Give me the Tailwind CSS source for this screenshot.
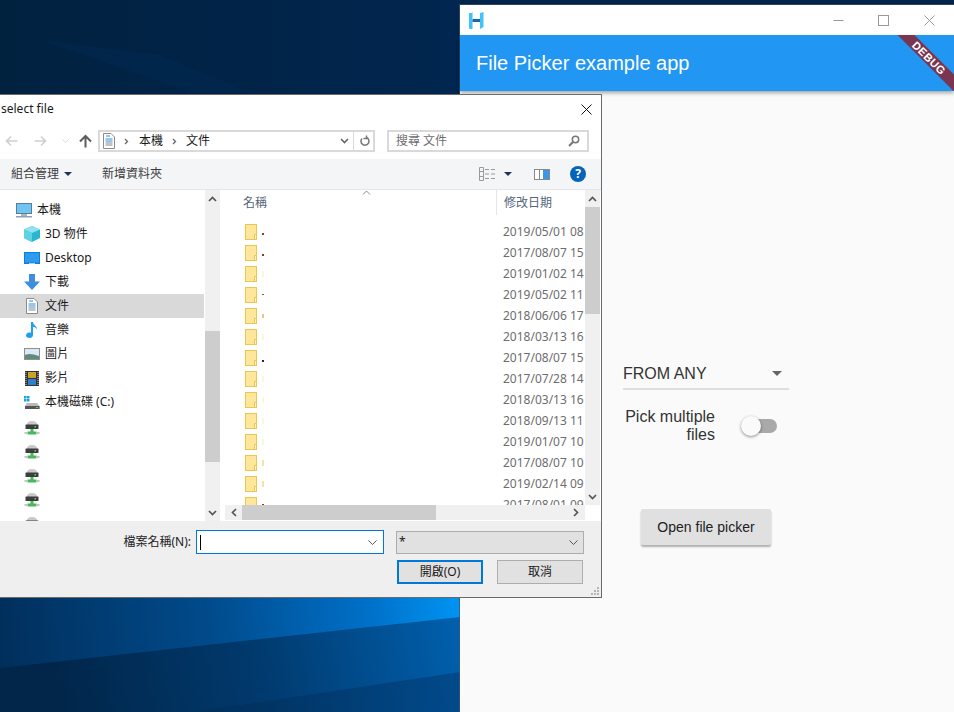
<!DOCTYPE html>
<html lang="en">
<head>
    <meta charset="UTF-8">
    <title>File Picker example app</title>
    <script src="https://cdn.jsdelivr.net/npm/@tailwindcss/browser@4"></script>
</head>
<body class="relative w-[954px] h-[712px] overflow-hidden bg-[#01244a] font-['Noto_Sans','Noto_Sans_CJK_TC',sans-serif] text-xs text-[#1a1a1a]">

    <!-- shared icons -->
    <svg class="hidden">
        <symbol id="folder" viewBox="0 0 12 16">
            <rect x="0.5" y="0.5" width="11" height="15" fill="#fee79a" stroke="#e9c750"/>
            <path d="M9.5 15.5V10.5H11.5V15.5Z" fill="#fff3c4" stroke="#e9c750"/>
        </symbol>
        <symbol id="netdrive" viewBox="0 0 16 16">
            <path d="M3 4.5C3 2.5 4.5 1 8 1s5 1.5 5 3.5V6H3Z" fill="#c9c9c9"/>
            <rect x="1.5" y="4.5" width="13" height="4.5" rx="0.5" fill="#3d3d3d"/>
            <rect x="10.5" y="6" width="1.5" height="1.5" fill="#4be04b"/>
            <rect x="6.5" y="9" width="3" height="3" fill="#46b95a"/>
            <rect x="3.5" y="11.5" width="9" height="3" fill="#46b95a"/>
            <rect x="0.5" y="12" width="3" height="2" fill="#c4c4c4"/>
            <rect x="12.5" y="12" width="3" height="2" fill="#c4c4c4"/>
        </symbol>
        <symbol id="docicon" viewBox="0 0 12 16">
            <path d="M0.5 0.5H8L11.5 4V15.5H0.5Z" fill="#fff" stroke="#8c8c8c"/>
            <path d="M3 3H7M2.5 6H9.5M2.5 8H9.5" stroke="#2f8fdc"/>
            <path d="M2.5 10H9.5M2.5 12H9.5" stroke="#7a8a99"/>
        </symbol>
    </svg>

    <!-- desktop wallpaper -->
    <svg class="absolute inset-0" width="954" height="712" viewBox="0 0 954 712">
        <defs>
            <linearGradient id="wallTop" x1="0" y1="0" x2="1" y2="0">
                <stop offset="0" stop-color="#01223f"/>
                <stop offset="0.5" stop-color="#012347"/>
                <stop offset="1" stop-color="#01264f"/>
            </linearGradient>
            <linearGradient id="wallUpper" gradientUnits="userSpaceOnUse" x1="0" y1="640" x2="460" y2="600">
                <stop offset="0" stop-color="#012f5c"/>
                <stop offset="0.45" stop-color="#014a8a"/>
                <stop offset="0.8" stop-color="#0070c8"/>
                <stop offset="1" stop-color="#0094f2"/>
            </linearGradient>
            <linearGradient id="wallLower" gradientUnits="userSpaceOnUse" x1="60" y1="700" x2="460" y2="620">
                <stop offset="0" stop-color="#01264a"/>
                <stop offset="0.5" stop-color="#013a6e"/>
                <stop offset="1" stop-color="#0160ae"/>
            </linearGradient>
            <linearGradient id="wallBottom" x1="0" y1="0" x2="1" y2="0">
                <stop offset="0" stop-color="#012c55"/>
                <stop offset="1" stop-color="#01427e"/>
            </linearGradient>
        </defs>
        <rect width="460" height="100" fill="url(#wallTop)"/>
        <path d="M40 40L160 55L250 92H190Z" fill="#02305c" opacity="0.3"/>
        <rect y="590" width="460" height="122" fill="url(#wallLower)"/>
        <path d="M0 590H460V617L0 668Z" fill="url(#wallUpper)"/>
        <path d="M195 712L460 672V712Z" fill="url(#wallBottom)" opacity="0.7"/>
    </svg>

    <!-- flutter app window -->
    <div class="absolute left-[460px] top-[5px] w-[494px] h-[707px] flex flex-col bg-[#fafafa] font-['Liberation_Sans',sans-serif] shadow-[0_0_0_1px_rgba(70,80,100,0.7)]">
        <div class="h-[30px] shrink-0 bg-white flex items-center pl-[9px]">
            <svg width="15" height="17" viewBox="0 0 15 17">
                <path d="M0 1H2.5L3.5 0V17H1L0 16Z" fill="#3fc3fb"/>
                <path d="M11 1L14.5 0V15L11 17Z" fill="#3fc3fb"/>
                <rect x="3.5" y="7" width="7.5" height="3" fill="#1f66a8"/>
            </svg>
            <svg class="ml-[349px]" width="11" height="11" viewBox="0 0 11 11"><path d="M0.5 5.5H10.5" stroke="#999"/></svg>
            <svg class="ml-[34px]" width="11" height="11" viewBox="0 0 11 11"><rect x="0.5" y="0.5" width="10" height="10" fill="none" stroke="#999"/></svg>
            <svg class="ml-[35px]" width="11" height="11" viewBox="0 0 11 11"><path d="M0.5 0.5L10.5 10.5M10.5 0.5L0.5 10.5" stroke="#999"/></svg>
        </div>
        <div class="relative h-[56px] shrink-0 bg-[#2196f3] flex items-center pl-4 shadow-[0_2px_4px_rgba(0,0,0,0.35)] overflow-hidden">
            <span class="text-[20px] text-white">File Picker example app</span>
            <!-- debug ribbon -->
            <div class="absolute left-[414px] top-[17px] w-[110px] h-[12px] rotate-45 bg-[#7a3650] flex items-center justify-center text-[11px] font-bold tracking-[0.5px] text-white">DEBUG</div>
        </div>
        <div class="flex-1 flex flex-col items-center pt-[267px] pr-[2px]">
            <div class="w-[166px] h-[32px] shrink-0 flex items-center justify-between border-b-2 border-[#dedede] text-base text-[#333] pr-[7px]">
                <span class="mt-px">FROM ANY</span>
                <span class="w-0 h-0 border-x-[5px] border-x-transparent border-t-[5px] border-t-[#666]"></span>
            </div>
            <div class="w-[166px] mt-[18px] flex items-center text-base leading-[18px] text-[#333]">
                <div class="w-[92px] text-right">Pick multiple files</div>
                <div class="relative ml-[30px] w-[32px] h-[14px] rounded-full bg-[#a9a9a9]">
                    <div class="absolute left-[-4px] top-[-3px] w-[20px] h-[20px] rounded-full bg-[#fafafa] shadow-[0_1px_3px_rgba(0,0,0,0.45)]"></div>
                </div>
            </div>
            <button class="mt-[65px] w-[130px] h-[36px] shrink-0 rounded-[2px] bg-[#e0e0e0] text-sm text-[#222] shadow-[0_2px_2px_rgba(0,0,0,0.3)]">Open file picker</button>
        </div>
    </div>

    <!-- windows file dialog -->
    <div class="absolute left-0 top-[94px] w-[602px] h-[504px] flex flex-col bg-white border-y border-r border-[#6a6a6a]">

        <!-- title -->
        <div class="h-[30px] shrink-0 flex items-center justify-between pl-px pr-[9px] pb-[2px]">
            <span class="text-xs">select file</span>
            <svg width="11" height="11" viewBox="0 0 11 11"><path d="M0.5 0.5L10.5 10.5M10.5 0.5L0.5 10.5" stroke="#111"/></svg>
        </div>

        <!-- address row -->
        <div class="h-[34px] shrink-0 flex items-start pt-[5px]">
            <svg class="ml-[5px] mt-[5px]" width="13" height="12" viewBox="0 0 13 12"><path d="M12.5 6H1.5M6 1.5L1.5 6L6 10.5" fill="none" stroke="#cfcfcf" stroke-width="1.6"/></svg>
            <svg class="ml-[16px] mt-[5px]" width="13" height="12" viewBox="0 0 13 12"><path d="M0.5 6H11.5M7 1.5L11.5 6L7 10.5" fill="none" stroke="#cfcfcf" stroke-width="1.6"/></svg>
            <svg class="ml-[15px] mt-[9px]" width="7" height="4" viewBox="0 0 7 4"><path d="M0.5 0.5L3.5 3.5L6.5 0.5" fill="none" stroke="#d8d8d8"/></svg>
            <svg class="ml-[10px] mt-[4px]" width="13" height="14" viewBox="0 0 13 14"><path d="M6.5 13.5V2M1 7.5L6.5 2L12 7.5" fill="none" stroke="#5c5c5c" stroke-width="2"/></svg>
            <div class="ml-[6px] w-[277px] h-[22px] flex items-center border-2 border-[#d9d9d9]">
                <svg class="ml-[3px] shrink-0" width="12" height="16"><use href="#docicon"/></svg>
                <svg class="ml-[9px] shrink-0" width="5" height="7" viewBox="0 0 5 7"><path d="M1 1L3.5 3.5L1 6" fill="none" stroke="#666" stroke-width="1.3"/></svg>
                <span class="ml-[10px]">本機</span>
                <svg class="ml-[9px] shrink-0" width="5" height="7" viewBox="0 0 5 7"><path d="M1 1L3.5 3.5L1 6" fill="none" stroke="#666" stroke-width="1.3"/></svg>
                <span class="ml-[9px]">文件</span>
                <svg class="ml-[130px] shrink-0" width="9" height="6" viewBox="0 0 9 6"><path d="M1 1L4.5 4.5L8 1" fill="none" stroke="#666" stroke-width="1.6"/></svg>
                <span class="ml-[4px] w-px h-full bg-[#d9d9d9]"></span>
                <svg class="ml-[6px] shrink-0" width="10" height="12" viewBox="0 0 10 12"><path d="M6.5 2.5A4 4 0 1 1 2 3.5M6.5 0.5V3.5H3.5" fill="none" stroke="#777" stroke-width="1.5"/></svg>
            </div>
            <div class="ml-[12px] w-[202px] h-[22px] flex items-center justify-between border-2 border-[#d9d9d9] pl-[7px] pr-[7px] text-[#6d6d6d]">
                <span>搜尋 文件</span>
                <svg width="12" height="12" viewBox="0 0 12 12"><circle cx="7.5" cy="4.5" r="3.2" fill="none" stroke="#777" stroke-width="1.5"/><path d="M5 7L1 11" stroke="#777" stroke-width="2"/></svg>
            </div>
        </div>

        <!-- toolbar -->
        <div class="h-[31px] shrink-0 flex items-center bg-[#f4f5f7] border-b border-[#e6e6e6] text-[#3c3c3c]">
            <span class="ml-[11px]">組合管理</span>
            <span class="ml-[5px] w-0 h-0 border-x-[4px] border-x-transparent border-t-[4px] border-t-[#1d3557]"></span>
            <span class="ml-[30px]">新增資料夾</span>
            <svg class="ml-[317px]" width="16" height="14" viewBox="0 0 16 14">
                <path d="M0.5 0.5H4.5V13.5H0.5Z" fill="none" stroke="#999"/>
                <path d="M1 4.5H4M1 9.5H4" stroke="#999"/>
                <path d="M6 2.5H10M12 2.5H16M6 7H10M12 7H16M6 11.5H10M12 11.5H16" stroke="#999"/>
            </svg>
            <span class="ml-[9px] w-0 h-0 border-x-[4px] border-x-transparent border-t-[4px] border-t-[#1d3557]"></span>
            <svg class="ml-[22px]" width="16" height="11" viewBox="0 0 16 11">
                <rect x="0.5" y="0.5" width="15" height="10" fill="#fff" stroke="#888"/>
                <path d="M5.5 0.5V10.5" stroke="#888"/>
                <rect x="9" y="1" width="6" height="9" fill="#3b96e8"/>
            </svg>
            <svg class="ml-[20px]" width="16" height="16" viewBox="0 0 16 16"><circle cx="8" cy="8" r="8" fill="#0563b8"/></svg>
            <span class="-ml-[12px] w-[8px] text-center text-[12px] font-bold text-white">?</span>
        </div>

        <!-- panes -->
        <div class="h-[331px] shrink-0 flex">
            <!-- nav tree -->
            <div class="w-[204px] mr-px shrink-0 flex flex-col overflow-hidden pt-[8px]">
                <div class="h-[24px] shrink-0 flex items-center pl-[16px]">
                    <svg width="16" height="15" viewBox="0 0 16 15">
                        <rect x="0.5" y="0.5" width="15" height="10" fill="#6fc6f5" stroke="#5d7b94"/>
                        <rect x="5" y="11" width="6" height="2" fill="#a9b8c4"/>
                        <rect x="0" y="13" width="16" height="1.5" fill="#8ea2b3"/>
                    </svg>
                    <span class="ml-[5px]">本機</span>
                </div>
                <div class="h-[24px] shrink-0 flex items-center pl-[24px]">
                    <svg width="16" height="16" viewBox="0 0 16 16">
                        <path d="M8 0L16 3.5V12L8 16L0 12V3.5Z" fill="#2bb6cf"/>
                        <path d="M8 0L16 3.5L8 7L0 3.5Z" fill="#8fe3ee"/>
                        <path d="M0 3.5L8 7V16L0 12Z" fill="#5fd2e2"/>
                    </svg>
                    <span class="ml-[5px]">3D 物件</span>
                </div>
                <div class="h-[24px] shrink-0 flex items-center pl-[24px]">
                    <svg width="16" height="13" viewBox="0 0 16 13">
                        <rect width="16" height="12" fill="#0f7ed8"/>
                        <rect x="1" y="1" width="14" height="9.5" fill="#2d9bf0"/>
                        <rect x="5" y="11" width="6" height="1" fill="#a9d4f5"/>
                    </svg>
                    <span class="ml-[5px]">Desktop</span>
                </div>
                <div class="h-[24px] shrink-0 flex items-center pl-[24px]">
                    <svg width="16" height="16" viewBox="0 0 16 16"><path d="M5 0H11V7.5H16L8 16L0 7.5H5Z" fill="#3d8fdc"/></svg>
                    <span class="ml-[5px]">下載</span>
                </div>
                <div class="h-[24px] shrink-0 flex items-center pl-[26px] bg-[#d9d9d9]">
                    <svg width="12" height="16"><use href="#docicon"/></svg>
                    <span class="ml-[7px]">文件</span>
                </div>
                <div class="h-[24px] shrink-0 flex items-center pl-[26px]">
                    <svg width="12" height="16" viewBox="0 0 12 16"><path d="M5 0H7C7 3 11 3.5 11 7.5C10 5.5 8.5 5 7 5V13C7 15 5.5 16 3.5 16S0 15 0 13.3 1.5 10.5 3.5 10.5C4 10.5 4.5 10.6 5 10.8Z" fill="#1fa0ef"/></svg>
                    <span class="ml-[7px]">音樂</span>
                </div>
                <div class="h-[24px] shrink-0 flex items-center pl-[24px]">
                    <svg width="16" height="12" viewBox="0 0 16 12">
                        <rect x="0.5" y="0.5" width="15" height="11" fill="#dbe9f4" stroke="#8f8f8f"/>
                        <path d="M1 7C5 5 9 6 15 8V11H1Z" fill="#5f8c7a"/>
                    </svg>
                    <span class="ml-[5px]">圖片</span>
                </div>
                <div class="h-[24px] shrink-0 flex items-center pl-[25px]">
                    <svg width="14" height="15" viewBox="0 0 14 15">
                        <rect width="14" height="15" fill="#333"/>
                        <rect x="3" y="1" width="8" height="6" fill="#c9a227"/>
                        <rect x="3" y="8" width="8" height="6" fill="#2e7fd0"/>
                        <path d="M1 1V14M13 1V14" stroke="#ccc" stroke-dasharray="1 1"/>
                    </svg>
                    <span class="ml-[6px]">影片</span>
                </div>
                <div class="h-[24px] shrink-0 flex items-center pl-[24px]">
                    <svg width="16" height="13" viewBox="0 0 16 13">
                        <rect width="2.5" height="2.5" fill="#1ba1e2"/><rect x="3" width="2.5" height="2.5" fill="#1ba1e2"/>
                        <rect y="3" width="2.5" height="2.5" fill="#1ba1e2"/><rect x="3" y="3" width="2.5" height="2.5" fill="#1ba1e2"/>
                        <path d="M3 7H13L15.5 10V13H1V10Z" fill="#b9b9b9"/>
                        <rect x="1" y="10" width="14.5" height="3" fill="#555"/>
                        <rect x="12" y="11" width="2" height="1" fill="#4be04b"/>
                    </svg>
                    <span class="ml-[5px]">本機磁碟 (C:)</span>
                </div>
                <div class="h-[24px] shrink-0 flex items-center pl-[24px] mt-[2px]"><svg width="16" height="16"><use href="#netdrive"/></svg></div>
                <div class="h-[24px] shrink-0 flex items-center pl-[24px]"><svg width="16" height="16"><use href="#netdrive"/></svg></div>
                <div class="h-[24px] shrink-0 flex items-center pl-[24px]"><svg width="16" height="16"><use href="#netdrive"/></svg></div>
                <div class="h-[24px] shrink-0 flex items-center pl-[24px]"><svg width="16" height="16"><use href="#netdrive"/></svg></div>
                <div class="h-[24px] shrink-0 flex items-start justify-between pl-[24px] pt-[4px]">
                    <svg width="16" height="16"><use href="#netdrive"/></svg>
                </div>
            </div>

            <!-- nav scrollbar -->
            <div class="w-[15px] shrink-0 flex flex-col items-center bg-[#f0f0f0]">
                <div class="h-[17px] shrink-0 flex items-center justify-center">
                    <svg width="9" height="6" viewBox="0 0 9 6"><path d="M1 5L4.5 1.5L8 5" fill="none" stroke="#555" stroke-width="1.7"/></svg>
                </div>
                <div class="mt-[124px] w-full h-[131px] shrink-0 bg-[#cdcdcd]"></div>
                <div class="mt-auto h-[17px] shrink-0 flex items-center justify-center">
                    <svg width="9" height="6" viewBox="0 0 9 6"><path d="M1 1L4.5 4.5L8 1" fill="none" stroke="#555" stroke-width="1.7"/></svg>
                </div>
            </div>

            <!-- file list -->
            <div class="flex-1 min-w-0 flex flex-col pl-[5px]">
                <div class="h-[315px] shrink-0 flex">
                    <div class="w-[360px] shrink-0 flex flex-col overflow-hidden">
                        <div class="relative h-[25px] shrink-0 flex items-center text-[#54667a]">
                            <span class="ml-[18px] w-[253px]">名稱</span>
                            <span class="w-px h-full bg-[#e5e5e5]"></span>
                            <span class="ml-[7px]">修改日期</span>
                            <svg class="absolute left-[137px] top-[0px]" width="9" height="5" viewBox="0 0 9 5"><path d="M1 4.5L4.5 1L8 4.5" fill="none" stroke="#8a8a8a"/></svg>
                        </div>
                        <div class="flex flex-col pt-[6px] text-[#6d6d6d] whitespace-nowrap">
                            <div class="h-[21px] shrink-0 flex items-center"><svg class="ml-[20px] shrink-0" width="12" height="16"><use href="#folder"/></svg><span class="ml-[5px] mt-[5px] w-[2px] h-[2px] shrink-0 bg-[#8a3a2a]"></span><span class="ml-[239px]">2019/05/01 08</span></div>
                            <div class="h-[21px] shrink-0 flex items-center"><svg class="ml-[20px] shrink-0" width="12" height="16"><use href="#folder"/></svg><span class="ml-[5px] mt-[5px] w-[2px] h-[2px] shrink-0 bg-[#8a3a2a]"></span><span class="ml-[239px]">2017/08/07 15</span></div>
                            <div class="h-[21px] shrink-0 flex items-center"><svg class="ml-[20px] shrink-0" width="12" height="16"><use href="#folder"/></svg><span class="ml-[5px] w-[2px] h-[6px] shrink-0 bg-[#fdf6d8]"></span><span class="ml-[239px]">2019/01/02 14</span></div>
                            <div class="h-[21px] shrink-0 flex items-center"><svg class="ml-[20px] shrink-0" width="12" height="16"><use href="#folder"/></svg><span class="ml-[5px] w-[2px] h-[1px] shrink-0 bg-[#a0562f]"></span><span class="ml-[239px]">2019/05/02 11</span></div>
                            <div class="h-[21px] shrink-0 flex items-center"><svg class="ml-[20px] shrink-0" width="12" height="16"><use href="#folder"/></svg><span class="ml-[5px] w-[2px] h-[4px] shrink-0 bg-[#f0c08a]"></span><span class="ml-[239px]">2018/06/06 17</span></div>
                            <div class="h-[21px] shrink-0 flex items-center"><svg class="ml-[20px] shrink-0" width="12" height="16"><use href="#folder"/></svg><span class="ml-[5px] w-[2px] h-[6px] shrink-0 bg-[#fdf6d8]"></span><span class="ml-[239px]">2018/03/13 16</span></div>
                            <div class="h-[21px] shrink-0 flex items-center"><svg class="ml-[20px] shrink-0" width="12" height="16"><use href="#folder"/></svg><span class="ml-[5px] mt-[7px] w-[2px] h-[2px] shrink-0 bg-[#2a2050]"></span><span class="ml-[239px]">2017/08/07 15</span></div>
                            <div class="h-[21px] shrink-0 flex items-center"><svg class="ml-[20px] shrink-0" width="12" height="16"><use href="#folder"/></svg><span class="ml-[5px] w-[2px] h-[6px] shrink-0 bg-[#fdf6d8]"></span><span class="ml-[239px]">2017/07/28 14</span></div>
                            <div class="h-[21px] shrink-0 flex items-center"><svg class="ml-[20px] shrink-0" width="12" height="16"><use href="#folder"/></svg><span class="ml-[5px] w-[2px] h-[6px] shrink-0 bg-[#fdf6d8]"></span><span class="ml-[239px]">2018/03/13 16</span></div>
                            <div class="h-[21px] shrink-0 flex items-center"><svg class="ml-[20px] shrink-0" width="12" height="16"><use href="#folder"/></svg><span class="ml-[5px] w-[2px] h-[6px] shrink-0 bg-[#fdf6d8]"></span><span class="ml-[239px]">2018/09/13 11</span></div>
                            <div class="h-[21px] shrink-0 flex items-center"><svg class="ml-[20px] shrink-0" width="12" height="16"><use href="#folder"/></svg><span class="ml-[5px] w-[2px] h-[6px] shrink-0 bg-[#fdf6d8]"></span><span class="ml-[239px]">2019/01/07 10</span></div>
                            <div class="h-[21px] shrink-0 flex items-center"><svg class="ml-[20px] shrink-0" width="12" height="16"><use href="#folder"/></svg><span class="ml-[5px] w-[2px] h-[6px] shrink-0 bg-[#f7e3a0]"></span><span class="ml-[239px]">2017/08/07 10</span></div>
                            <div class="h-[21px] shrink-0 flex items-center"><svg class="ml-[20px] shrink-0" width="12" height="16"><use href="#folder"/></svg><span class="ml-[5px] w-[2px] h-[6px] shrink-0 bg-[#f7e3a0]"></span><span class="ml-[239px]">2019/02/14 09</span></div>
                            <div class="h-[21px] shrink-0 flex items-center"><svg class="ml-[20px] shrink-0" width="12" height="16"><use href="#folder"/></svg><span class="ml-[5px] w-[2px] h-[2px] shrink-0 bg-[#8a3a2a]"></span><span class="ml-[239px]">2017/08/01 09</span></div>
                        </div>
                    </div>
                    <div class="w-[15px] shrink-0 flex flex-col bg-[#f0f0f0]">
                        <div class="h-[17px] shrink-0 flex items-center justify-center">
                            <svg width="9" height="6" viewBox="0 0 9 6"><path d="M1 5L4.5 1.5L8 5" fill="none" stroke="#555" stroke-width="1.7"/></svg>
                        </div>
                        <div class="h-[107px] shrink-0 bg-[#cdcdcd]"></div>
                        <div class="mt-auto h-[17px] shrink-0 flex items-center justify-center">
                            <svg width="9" height="6" viewBox="0 0 9 6"><path d="M1 1L4.5 4.5L8 1" fill="none" stroke="#555" stroke-width="1.7"/></svg>
                        </div>
                    </div>
                </div>
                <div class="h-[15px] shrink-0 flex">
                    <div class="w-[360px] shrink-0 flex items-center bg-[#f0f0f0]">
                        <div class="w-[17px] shrink-0 flex justify-center">
                            <svg width="6" height="9" viewBox="0 0 6 9"><path d="M5 1L1.5 4.5L5 8" fill="none" stroke="#555" stroke-width="1.7"/></svg>
                        </div>
                        <div class="w-[194px] h-full bg-[#cdcdcd]"></div>
                        <svg class="ml-auto mr-[6px]" width="6" height="9" viewBox="0 0 6 9"><path d="M1 1L4.5 4.5L1 8" fill="none" stroke="#555" stroke-width="1.7"/></svg>
                    </div>
                </div>
            </div>
        </div>

        <!-- file name row and buttons -->
        <div class="relative flex-1 flex flex-col bg-[#efefef]">
            <div class="flex items-center pt-[9px]">
                <span class="w-[191px] text-right text-[#222]">檔案名稱(N):</span>
                <div class="ml-[5px] w-[188px] h-[24px] flex items-center justify-between bg-white border-[1.5px] border-[#0078d7] pl-[3px] pr-[6px]">
                    <span class="w-px h-[15px] bg-black"></span>
                    <svg width="9" height="5" viewBox="0 0 9 5"><path d="M0.5 0.5L4.5 4.5L8.5 0.5" fill="none" stroke="#555"/></svg>
                </div>
                <div class="ml-[12px] w-[188px] h-[23px] flex items-center justify-between bg-[#e1e1e1] border border-[#adadad] pl-[2px] pr-[5px]">
                    <span>*</span>
                    <svg width="9" height="5" viewBox="0 0 9 5"><path d="M0.5 0.5L4.5 4.5L8.5 0.5" fill="none" stroke="#555"/></svg>
                </div>
            </div>
            <div class="flex mt-[6px] pl-[397px]">
                <button class="w-[86px] h-[24px] bg-[#e1e1e1] border-2 border-[#0078d7] text-xs">開啟(O)</button>
                <button class="ml-[14px] w-[86px] h-[24px] bg-[#e1e1e1] border border-[#adadad] text-xs">取消</button>
            </div>
            <!-- resize grip -->
            <svg class="absolute right-[2px] bottom-[2px]" width="8" height="8" viewBox="0 0 8 8" fill="#b5b5b5">
                <rect x="6" y="0" width="2" height="2"/>
                <rect x="3" y="3" width="2" height="2"/><rect x="6" y="3" width="2" height="2"/>
                <rect x="0" y="6" width="2" height="2"/><rect x="3" y="6" width="2" height="2"/><rect x="6" y="6" width="2" height="2"/>
            </svg>
        </div>
    </div>
</body>
</html>
